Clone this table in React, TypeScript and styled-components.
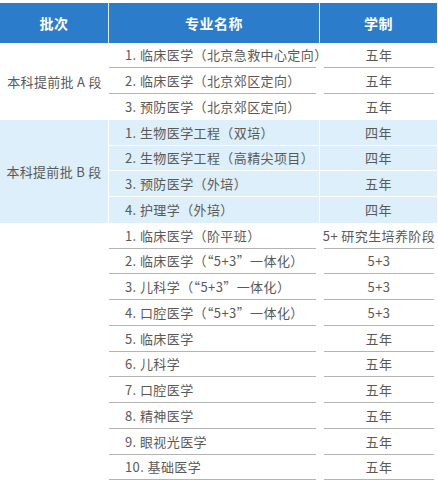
import styled, { createGlobalStyle } from 'styled-components';

const GlobalStyle = createGlobalStyle`
	html, body {
		margin: 0;
		padding: 0;
		background: #ffffff;
	}
	body {
		font-family: 'Noto Sans CJK SC', 'Noto Sans', sans-serif;
	}
`;

type Major = { name: string; years: string };

const groupA: Major[] = [
	{ name: '1. 临床医学（北京急救中心定向）', years: '五年' },
	{ name: '2. 临床医学（北京郊区定向）', years: '五年' },
	{ name: '3. 预防医学（北京郊区定向）', years: '五年' },
];

const groupB: Major[] = [
	{ name: '1. 生物医学工程（双培）', years: '四年' },
	{ name: '2. 生物医学工程（高精尖项目）', years: '四年' },
	{ name: '3. 预防医学（外培）', years: '五年' },
	{ name: '4. 护理学（外培）', years: '四年' },
];

const groupC: Major[] = [
	{ name: '1. 临床医学（阶平班）', years: '5+ 研究生培养阶段' },
	{ name: '2. 临床医学（“5+3”一体化）', years: '5+3' },
	{ name: '3. 儿科学（“5+3”一体化）', years: '5+3' },
	{ name: '4. 口腔医学（“5+3”一体化）', years: '5+3' },
	{ name: '5. 临床医学', years: '五年' },
	{ name: '6. 儿科学', years: '五年' },
	{ name: '7. 口腔医学', years: '五年' },
	{ name: '8. 精神医学', years: '五年' },
	{ name: '9. 眼视光医学', years: '五年' },
	{ name: '10. 基础医学', years: '五年' },
];

export default function App() {
	const renderRows = (list: Major[], tone: 'plain' | 'tinted', lastLine: boolean) =>
		list.map((m, i) => {
			const line = i < list.length - 1 || lastLine;
			return [
				<SNameCell key={`n${i}`} $tone={tone} $line={line}>
					{m.name}
				</SNameCell>,
				<SYearCell key={`y${i}`} $tone={tone} $line={line}>
					{m.years}
				</SYearCell>,
			];
		});

	return (
		<>
			<GlobalStyle />
			<SFrame>
				<STable>
					<SHead $divider>批次</SHead>
					<SHead $divider>专业名称</SHead>
					<SHead>学制</SHead>

					<SBatch $span={groupA.length} $tone='plain'>
						本科提前批 A 段
					</SBatch>
					{renderRows(groupA, 'plain', false)}

					<SBatch $span={groupB.length} $tone='tinted'>
						本科提前批 B 段
					</SBatch>
					{renderRows(groupB, 'tinted', false)}

					<SBatch $span={groupC.length} $tone='plain' />
					{renderRows(groupC, 'plain', true)}
				</STable>
			</SFrame>
		</>
	);
}

const SFrame = styled.div`
	padding-top: 3px;
	width: 438px;
`;

const STable = styled.div`
	display: grid;
	grid-template-columns: 109px 211px 117px;
	grid-template-rows: 39.5px repeat(17, 25.75px);
	color: #595959;
	font-size: 13px;
`;

const SHead = styled.div<{ $divider?: boolean }>`
	display: flex;
	align-items: center;
	justify-content: center;
	background-color: #2b7dcb;
	color: #ffffff;
	font-size: 14px;
	font-weight: 700;
	letter-spacing: 0.5px;
	border-right: ${(p) => (p.$divider ? '1.5px solid #dfeefa' : 'none')};
`;

const SBatch = styled.div<{ $span: number; $tone: 'plain' | 'tinted' }>`
	grid-column: 1;
	grid-row: span ${(p) => p.$span};
	display: flex;
	align-items: center;
	justify-content: center;
	background-color: ${(p) => (p.$tone === 'tinted' ? '#ddeffa' : '#ffffff')};
	border-right: ${(p) => (p.$tone === 'tinted' ? '1.5px solid #ffffff' : 'none')};
	letter-spacing: 0.3px;
`;

const SCell = styled.div<{ $tone: 'plain' | 'tinted'; $line: boolean }>`
	display: flex;
	align-items: center;
	background-color: ${(p) => (p.$tone === 'tinted' ? '#ddeffa' : '#ffffff')};
	box-sizing: border-box;
	border-bottom: ${(p) =>
		!p.$line ? 'none' : p.$tone === 'tinted' ? '1.5px solid #ffffff' : '1.5px solid #b4b4b4'};
	white-space: nowrap;
`;

const SNameCell = styled(SCell)`
	grid-column: 2;
	padding-left: 16px;
	margin-right: ${(p) => (p.$tone === 'tinted' ? '0' : '4px')};
	border-right: ${(p) => (p.$tone === 'tinted' ? '1.5px solid #ffffff' : 'none')};
	letter-spacing: 0.4px;
`;

const SYearCell = styled(SCell)`
	grid-column: 3;
	justify-content: center;
	margin: ${(p) => (p.$tone === 'tinted' ? '0' : '0 3px 0 4px')};
	letter-spacing: 0.4px;
`;
